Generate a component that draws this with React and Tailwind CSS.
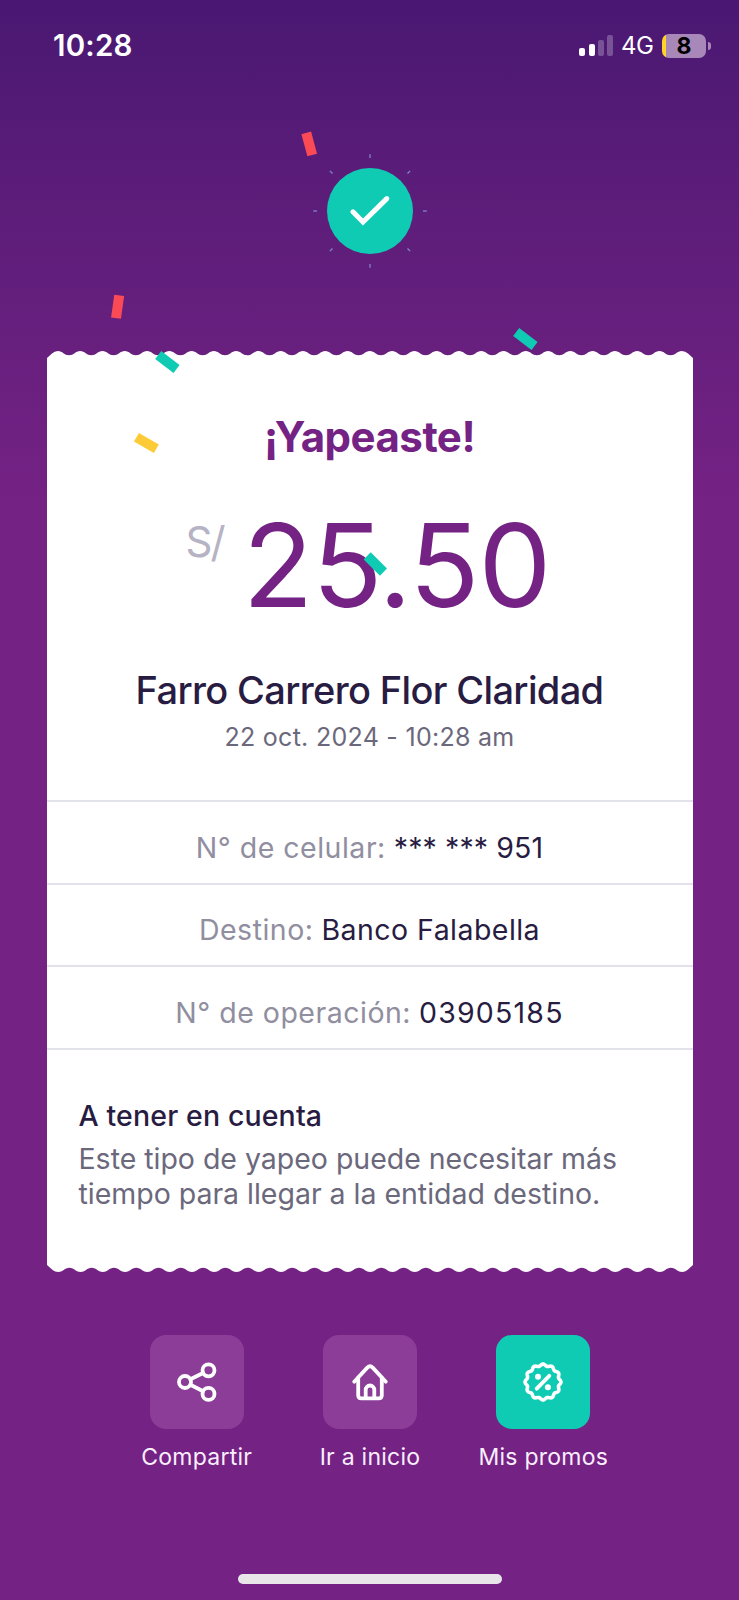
import React from 'react';

const CONFETTI = [
  { x: 309.8, y: 144, angle: 75, color: '#fa4a56' },
  { x: 117.3, y: 306.3, angle: -82, color: '#fa4a56' },
  { x: 525.2, y: 338.3, angle: 37, color: '#10cbb4' },
  { x: 167.4, y: 362, angle: 37, color: '#10cbb4' },
  { x: 146.4, y: 443, angle: 30, color: '#fdcb38' },
  { x: 375.7, y: 564, angle: 45, color: '#10cbb4' },
];

const DETAILS = [
  { label: 'N° de celular:', value: '*** *** 951', tracking: 'tracking-[0.1px]' },
  { label: 'Destino:', value: 'Banco Falabella', tracking: 'tracking-[0.45px]' },
  { label: 'N° de operación:', value: '03905185', tracking: 'tracking-[1.2px]' },
];

// Scalloped paper edge, one crest every `step` px
const buildWave = () => {
  const step = 22.28;
  const first = 10.9;
  let d = `M0 8 V7 L5 2.6 Q7.5 0 ${first} 0`;
  for (let i = 0; i < 28; i++) {
    const x = first + i * step;
    d += ` C${x + 4.6} 0 ${x + 6.4} 4.3 ${x + step / 2} 4.3`;
    d += ` S${x + step - 4.6} 0 ${x + step} 0`;
  }
  return d + ' Q638.5 0 641 2.6 L646 7 V8 Z';
};

const buildBadge = () => {
  const points = [];
  for (let i = 0; i < 180; i++) {
    const t = (i * Math.PI) / 90;
    const r = 17 + 0.95 * Math.cos(12 * t);
    points.push(`${(r * Math.sin(t)).toFixed(2)} ${(-r * Math.cos(t)).toFixed(2)}`);
  }
  return `M${points.join('L')}Z`;
};

const WAVE = buildWave();
const BADGE = buildBadge();

const Wave = ({ className = '' }) => (
  <svg viewBox="0 0 646 8" className={`block h-2 w-[646px] ${className}`}>
    <path d={WAVE} fill="#fff" />
  </svg>
);

const Icon = ({ children }) => (
  <svg
    viewBox="-22 -22 44 44"
    className="h-11 w-11"
    fill="none"
    stroke="#fff"
    strokeWidth="3.8"
    strokeLinecap="round"
    strokeLinejoin="round"
  >
    {children}
  </svg>
);

const ShareIcon = () => (
  <Icon>
    <circle cx="-12" cy="0" r="6" />
    <circle cx="11.5" cy="-11.7" r="6" />
    <circle cx="11.5" cy="11.9" r="6" />
    <path d="M-6.6 -2.7 L6.1 -9 M-6.6 2.7 L6.1 9.2" />
  </Icon>
);

const HomeIcon = () => (
  <Icon>
    <path d="M-15.8 -0.3 L-2.7 -14.4 Q0 -17 2.7 -14.4 L15.8 -0.3" />
    <path d="M-11.8 -4 V13.3 Q-11.8 16.4 -8.7 16.4 H8.7 Q11.8 16.4 11.8 13.3 V-4" />
    <path d="M-4.3 16 V7.8 A4.3 4.3 0 0 1 4.3 7.8 V16" />
  </Icon>
);

const PromoIcon = () => (
  <Icon>
    <path d={BADGE} strokeWidth="3.6" />
    <path d="M-6.3 6.7 L6.3 -6.2" />
    <circle cx="-5" cy="-5.2" r="3" fill="#fff" stroke="none" />
    <circle cx="4.9" cy="5.3" r="3" fill="#fff" stroke="none" />
  </Icon>
);

const ACTIONS = [
  { label: 'Compartir', icon: ShareIcon, bg: 'bg-[#8b3d98]' },
  { label: 'Ir a inicio', icon: HomeIcon, bg: 'bg-[#8b3d98]' },
  { label: 'Mis promos', icon: PromoIcon, bg: 'bg-[#10cbb4]' },
];

const StatusBar = () => (
  <div className="flex h-[91px] items-center justify-between pl-[53px] pr-7 text-white">
    <span className="text-[29.5px] font-semibold leading-none tracking-[0.2px]">10:28</span>
    <div className="flex items-center">
      <div className="flex h-[21px] items-end gap-[3.2px]">
        <span className="h-2 w-1.5 rounded-[2px] bg-white" />
        <span className="h-3 w-1.5 rounded-[2px] bg-white" />
        <span className="h-4 w-1.5 rounded-[2px] bg-white/25" />
        <span className="h-[21px] w-1.5 rounded-[2px] bg-white/25" />
      </div>
      <span className="ml-[8px] w-[33px] pt-px text-[24px] leading-7 tracking-[-0.5px]">4G</span>
      <div className="ml-2 flex h-6 w-11 items-center justify-center rounded-[7px] bg-[linear-gradient(90deg,#ffd426_4.5px,#a888b8_4.5px)]">
        <span className="pt-px text-[23px] font-bold leading-7 text-black">8</span>
      </div>
      <span className="ml-[2px] h-2 w-[3px] rounded-r-full bg-[#a888b8]" />
    </div>
  </div>
);

const SuccessBadge = () => (
  <svg viewBox="-58 -58 116 116" className="mt-[62px] h-[116px] w-[116px] self-center">
    {[0, 45, 90, 135, 180, 225, 270, 315].map((a) => (
      <path key={a} d="M0 -56.8 V-53" transform={`rotate(${a})`} stroke="#7f86cc" strokeWidth="1.3" />
    ))}
    <circle r="43" fill="#10cbb4" />
    <path d="M-17.1 0.8 L-7 11 L16.8 -12.4" fill="none" stroke="#fff" strokeWidth="5" strokeLinecap="round" />
  </svg>
);

const Receipt = () => (
  <div className="mt-[82px] w-[646px] self-center">
    <Wave />
    <div className="h-[905px] bg-white">
      <div className="flex flex-col items-center pt-[52px] text-center">
        <h1 className="text-[42px] font-bold leading-[52px] tracking-[-0.5px] text-[#742284]">¡Yapeaste!</h1>
        <div className="mt-[45px] flex items-start gap-[19px] pr-[3px]">
          <span className="mt-[13px] text-[42px] leading-[42px] tracking-[-2px] text-[#b5b3c4]">S/</span>
          <span className="text-[115.5px] leading-[114px] tracking-[-0.9px] text-[#742284]">25.50</span>
        </div>
        <h2 className="mt-[45px] text-[38px] font-medium leading-[46px] tracking-[-0.65px] text-[#281c42]">
          Farro Carrero Flor Claridad
        </h2>
        <p className="mt-[9px] text-[25px] leading-[30px] tracking-[0.28px] text-[#6b687c]">22 oct. 2024 - 10:28 am</p>
      </div>

      <div className="mt-[48px] border-b-2 border-[#e2e2ea]">
        {DETAILS.map((row) => (
          <div
            key={row.label}
            className="flex h-[82.6px] items-center justify-center gap-[8px] border-t-2 border-[#e2e2ea] pt-[11px] text-[28.5px] leading-none"
          >
            <span className="tracking-[0.5px] text-[#918ea0]">{row.label}</span>
            <span className={`text-[#281c42] ${row.tracking}`}>{row.value}</span>
          </div>
        ))}
      </div>

      <div className="pl-[32px] pt-[49px] text-[28.5px]">
        <h3 className="font-medium leading-[34px] tracking-[0.13px] text-[#281c42]">A tener en cuenta</h3>
        <p className="mt-[8.5px] leading-[35px] tracking-[-0.02px] text-[#6b687c]">
          Este tipo de yapeo puede necesitar más
          <br />
          tiempo para llegar a la entidad destino.
        </p>
      </div>
    </div>
    <Wave className="rotate-180" />
  </div>
);

export default function App() {
  return (
    <div className="relative flex h-[1600px] w-[739px] flex-col overflow-hidden bg-[linear-gradient(180deg,#491872_0px,#5c1d79_200px,#742284_500px)] font-['Inter',sans-serif]">
      <StatusBar />
      <SuccessBadge />
      <Receipt />

      <div className="mt-[63px] grid w-[521px] grid-cols-3 self-center pl-px">
        {ACTIONS.map(({ label, icon: ActionIcon, bg }) => (
          <div key={label} className="flex flex-col items-center">
            <button className={`flex h-[94px] w-[94px] items-center justify-center rounded-2xl ${bg}`}>
              <ActionIcon />
            </button>
            <span className="mt-[14px] whitespace-nowrap text-[23px] leading-7 tracking-[0.25px] text-[#fbeefd]">{label}</span>
          </div>
        ))}
      </div>

      <div className="mb-4 mt-auto h-2.5 w-[264px] self-center rounded-full bg-[#e9e6ea]" />

      {/* Confetti */}
      {CONFETTI.map((c) => (
        <span
          key={`${c.x}-${c.y}`}
          className="absolute -ml-[11.4px] -mt-[4.8px] h-[9.6px] w-[22.8px]"
          style={{ left: c.x, top: c.y, backgroundColor: c.color, transform: `rotate(${c.angle}deg)` }}
        />
      ))}
    </div>
  );
}
